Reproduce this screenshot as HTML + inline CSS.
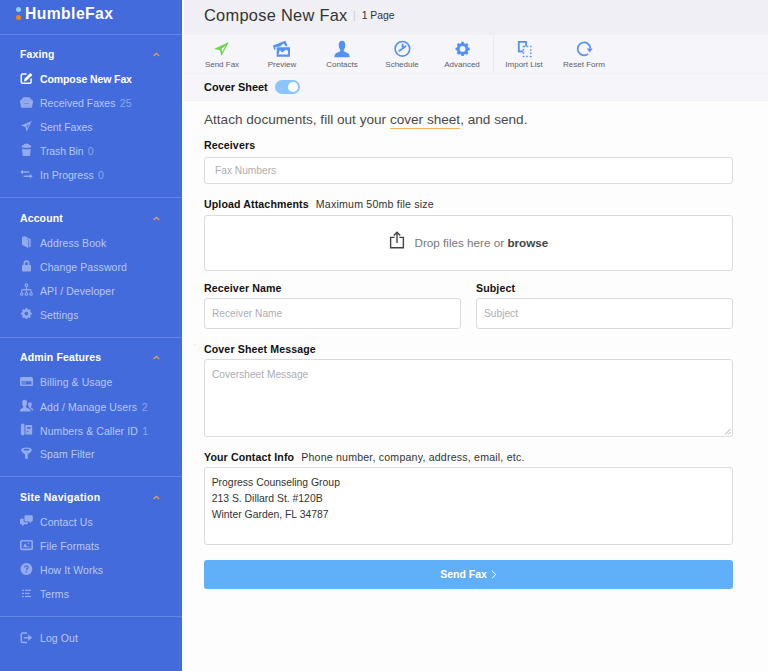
<!DOCTYPE html>
<html lang="en">
<head>
<meta charset="utf-8">
<title>HumbleFax - Compose New Fax</title>
<style>
*{box-sizing:border-box;margin:0;padding:0}
html,body{width:768px;height:671px;overflow:hidden;background:#fdfdfd;font-family:"Liberation Sans",sans-serif;}
body{position:relative}
#sb{position:absolute;left:0;top:0;width:181.5px;height:671px;background:#436bdc;color:#fff}
#sb .hr{position:absolute;left:0;width:182px;height:1px;background:#6585e4}
#logo{position:absolute;left:25px;top:3.2px;font-weight:bold;font-size:15.7px;letter-spacing:0.42px;line-height:22px;color:#fff}
.dot{position:absolute;width:5px;height:5px;border-radius:50%}
.sh{position:absolute;left:20px;font-weight:bold;font-size:10.5px;line-height:14px;color:#fff;white-space:nowrap;letter-spacing:0.12px}
.chev{position:absolute;left:152px;width:8px;height:6px}
.it{position:absolute;left:40px;font-size:10.5px;line-height:14px;color:#b9c8f3;white-space:nowrap;letter-spacing:0.08px}
.it b{font-weight:normal;color:#8da5ec;margin-left:1.5px}
.it.act{color:#fff;font-weight:bold;letter-spacing:-0.1px}
.ic{position:absolute;left:16px;width:20px;height:20px}
#main{position:absolute;left:182px;top:0;width:586px;height:671px}
#hd{position:absolute;left:0;top:0;width:586px;height:35px;background:#efeff5;z-index:2}
#tb{position:absolute;left:0;top:34px;width:586px;height:40px;background:#f5f5fa;border-bottom:1px solid #ededf3}
#cs{position:absolute;left:0;top:74px;width:586px;height:27.4px;background:#f5f5fa;border-bottom:1px solid #efeff4}
h1{position:absolute;left:22px;top:3.8px;letter-spacing:0.28px;font-weight:normal;font-size:16.4px;line-height:22px;color:#333;white-space:nowrap}
#pg{position:absolute;left:171px;top:10px;font-size:10.4px;line-height:12px;color:#333;white-space:nowrap}
.tl{position:absolute;top:26px;width:60px;text-align:center;font-size:8px;line-height:9px;color:#606066;white-space:nowrap}
.ti{position:absolute;top:6px;width:16px;height:16px}
.lb{position:absolute;left:22px;font-weight:bold;font-size:10.6px;line-height:13px;color:#111;white-space:nowrap;letter-spacing:0.12px}
.lb span{font-weight:normal;color:#333;margin-left:4px;letter-spacing:0.2px}
.inp{position:absolute;background:#fff;border:1px solid #dadadf;border-radius:3px;font-size:10.2px;color:#adadb2;line-height:12px}
.rz{position:absolute;width:7px;height:7px}
</style>
</head>
<body>
<div id="sb">
  <div class="dot" style="left:16px;top:7px;background:#8fd0ff"></div>
  <div class="dot" style="left:16px;top:14.5px;background:#f5870f"></div>
  <div id="logo">HumbleFax</div>
  <div class="hr" style="top:33.6px"></div>

  <div class="sh" style="top:47px">Faxing</div>
  <svg class="chev" style="top:51px" viewBox="0 0 8 6"><path d="M1.6 5 L4.4 2.3 L7.2 5" fill="none" stroke="#f0a04b" stroke-width="1.1"/></svg>
  <div class="it act" style="top:72px">Compose New Fax</div>
  <div class="it" style="top:96px;letter-spacing:0.01px">Received Faxes <b>25</b></div>
  <div class="it" style="top:120px;letter-spacing:-0.07px">Sent Faxes</div>
  <div class="it" style="top:144px;letter-spacing:-0.12px">Trash Bin <b>0</b></div>
  <div class="it" style="top:168px;letter-spacing:0px">In Progress <b>0</b></div>
  <div class="hr" style="top:197px"></div>

  <div class="sh" style="top:211px">Account</div>
  <svg class="chev" style="top:215px" viewBox="0 0 8 6"><path d="M1.6 5 L4.4 2.3 L7.2 5" fill="none" stroke="#f0a04b" stroke-width="1.1"/></svg>
  <div class="it" style="top:235.5px">Address Book</div>
  <div class="it" style="top:259.5px">Change Password</div>
  <div class="it" style="top:283.5px">API / Developer</div>
  <div class="it" style="top:307.5px">Settings</div>
  <div class="hr" style="top:337px"></div>

  <div class="sh" style="top:350px;letter-spacing:0.14px">Admin Features</div>
  <svg class="chev" style="top:354px" viewBox="0 0 8 6"><path d="M1.6 5 L4.4 2.3 L7.2 5" fill="none" stroke="#f0a04b" stroke-width="1.1"/></svg>
  <div class="it" style="top:375px">Billing &amp; Usage</div>
  <div class="it" style="top:399.5px">Add / Manage Users <b>2</b></div>
  <div class="it" style="top:423.5px">Numbers &amp; Caller ID <b>1</b></div>
  <div class="it" style="top:447px">Spam Filter</div>
  <div class="hr" style="top:476px"></div>

  <div class="sh" style="top:490px;letter-spacing:0.3px">Site Navigation</div>
  <svg class="chev" style="top:494px" viewBox="0 0 8 6"><path d="M1.6 5 L4.4 2.3 L7.2 5" fill="none" stroke="#f0a04b" stroke-width="1.1"/></svg>
  <div class="it" style="top:514.5px">Contact Us</div>
  <div class="it" style="top:538.5px">File Formats</div>
  <div class="it" style="top:562.5px">How It Works</div>
  <div class="it" style="top:586.5px">Terms</div>
  <div class="hr" style="top:616px"></div>
  <div class="it" style="top:631px">Log Out</div>
<!--SBI-->
<svg class="ic" style="top:69px" viewBox="0 0 20 20"><path d="M10 5H6.6Q5.3 5 5.3 6.3V13Q5.3 14.3 6.6 14.3H13.8Q15.1 14.3 15.1 13V10" fill="none" stroke="#fff" stroke-width="1.5" stroke-linecap="round"/><path d="M14.3 3.9L16.4 6L10.4 11.8L7.9 12.4L8.5 9.8Z" fill="#fff"/></svg>
<svg class="ic" style="top:93px" viewBox="0 0 20 20"><path fill-rule="evenodd" d="M7.6 4.3H13.3L16.6 7.4Q17.2 7.9 17 8.7L16 14Q15.9 14.7 15.1 14.7H5.9Q5.2 14.7 5 14L4 8.7Q3.8 7.9 4.4 7.4Z" fill="#94abeb"/><rect x="8.1" y="9.9" width="4.8" height="1.1" rx="0.5" fill="#6c8be4"/><path d="M5.5 7.3H15.5" stroke="#7f9ae6" stroke-width="0.5"/></svg>
<svg class="ic" style="top:117px" viewBox="0 0 20 20"><path fill-rule="evenodd" d="M15.9 3.9L4.9 8.6L9.4 9.9L10.6 14.6ZM13.2 6.9L11 11.2L10.6 8.9Z" fill="#94abeb"/></svg>
<svg class="ic" style="top:141px" viewBox="0 0 20 20"><path d="M5.4 5.6Q5.4 4.3 7.6 4L8.2 2.9Q10.4 2.3 12.6 2.9L13.2 4Q15.4 4.3 15.4 5.6Q15.4 6.9 10.4 6.9Q5.4 6.9 5.4 5.6Z" fill="#94abeb"/><path d="M6.1 7.7Q10.4 9 14.7 7.7L14.2 14Q14.1 15 13 15H7.8Q6.7 15 6.6 14Z" fill="#94abeb"/></svg>
<svg class="ic" style="top:165px" viewBox="0 0 20 20"><path d="M4.2 7L7 4.6V6.2H13.2V7.8H7V9.4Z" fill="#94abeb"/><path d="M16.7 11.3L13.9 8.9V10.5H7.6V12.1H13.9V13.7Z" fill="#94abeb"/></svg>
<svg class="ic" style="top:232px" viewBox="0 0 20 20"><path d="M6 5.3L8.3 4L12.3 8.4V16L6 12.7Z" fill="#94abeb"/><path d="M9.3 4.2L14.8 7.2V14.6L13 15.6V8.2L8.6 5.2Z" fill="#94abeb" opacity="0.85"/></svg>
<svg class="ic" style="top:256px" viewBox="0 0 20 20"><rect x="6" y="9" width="9" height="6.6" rx="0.8" fill="#94abeb"/><path d="M8.3 9.5V7.6A2.2 2.4 0 0 1 12.7 7.6V9.5" fill="none" stroke="#94abeb" stroke-width="1.7"/></svg>
<svg class="ic" style="top:280px" viewBox="0 0 20 20"><g fill="none" stroke="#94abeb" stroke-width="1.1"><circle cx="10.4" cy="5.2" r="1.3"/><circle cx="5.7" cy="14" r="1.3"/><circle cx="10.4" cy="14" r="1.3"/><circle cx="15.1" cy="14" r="1.3"/><path d="M10.4 6.5V12.7M5.7 12.7V10.8Q5.7 9.6 6.9 9.6H13.9Q15.1 9.6 15.1 10.8V12.7"/></g></svg>
<svg class="ic" style="top:304px" viewBox="0 0 20 20"><path fill-rule="evenodd" fill="#94abeb" d="M14.65 8.47 L15.83 8.74 L15.83 10.46 L14.65 10.73 L14.20 11.81 L14.85 12.83 L13.63 14.05 L12.61 13.40 L11.53 13.85 L11.26 15.03 L9.54 15.03 L9.27 13.85 L8.19 13.40 L7.17 14.05 L5.95 12.83 L6.60 11.81 L6.15 10.73 L4.97 10.46 L4.97 8.74 L6.15 8.47 L6.60 7.39 L5.95 6.37 L7.17 5.15 L8.19 5.80 L9.27 5.35 L9.54 4.17 L11.26 4.17 L11.53 5.35 L12.61 5.80 L13.63 5.15 L14.85 6.37 L14.20 7.39Z M8.50 9.60 a1.90 1.90 0 1 0 3.80 0 a1.90 1.90 0 1 0 -3.80 0Z"/></svg>
<svg class="ic" style="top:372px" viewBox="0 0 20 20"><path fill-rule="evenodd" d="M5.5 5H15.5Q17 5 17 6.5V12.6Q17 14.1 15.5 14.1H5.5Q4 14.1 4 12.6V6.5Q4 5 5.5 5ZM5.6 9.2V12.5H15.4V9.2Z" fill="#94abeb"/><rect x="6.3" y="10.3" width="3.8" height="1.2" fill="#94abeb" opacity="0.8"/></svg>
<svg class="ic" style="top:396px" viewBox="0 0 20 20"><path d="M8.6 3.7Q11.1 3.7 11.1 6.8Q11.1 9.2 9.9 10.2V11.3L13.6 13Q14.6 13.6 14.6 15.6H3.8Q3.8 13.6 4.8 13L7.3 11.3V10.2Q6.1 9.2 6.1 6.8Q6.1 3.7 8.6 3.7Z" fill="#94abeb"/><path d="M13.9 6.2Q15.8 6.2 15.8 8.3Q15.8 9.8 15 10.6V11.4L16.6 12.6Q17.2 13.2 17.2 14.4H15.7Q15.4 12.8 14.2 12.3L12.9 11.6V10.6Q12 9.8 12 8.3Q12 6.2 13.9 6.2Z" fill="#94abeb"/></svg>
<svg class="ic" style="top:420px" viewBox="0 0 20 20"><rect x="4.9" y="3.6" width="3.6" height="12" rx="1.8" fill="#94abeb"/><path fill-rule="evenodd" d="M10.4 5H15.2Q16.2 5 16.2 6V13.6Q16.2 14.6 15.2 14.6H10.4Q9.4 14.6 9.4 13.6V6Q9.4 5 10.4 5ZM11 7.2V8.8H14.6V7.2ZM11 11V12.2H12.3V11Z" fill="#94abeb"/></svg>
<svg class="ic" style="top:444px" viewBox="0 0 20 20"><path fill-rule="evenodd" d="M10.4 3.4Q15.8 3.4 15.8 6Q15.8 7 14.6 8L11.8 10.4V14.2Q11.8 14.9 10.4 14.9Q9 14.9 9 14.2V10.4L6.2 8Q5 7 5 6Q5 3.4 10.4 3.4ZM10.4 4.8Q7.4 4.8 7.4 5.7Q7.4 6.6 10.4 6.6Q13.4 6.6 13.4 5.7Q13.4 4.8 10.4 4.8Z" fill="#94abeb"/></svg>
<svg class="ic" style="top:511px" viewBox="0 0 20 20"><path d="M9.5 4.3H15.8Q16.8 4.3 16.8 5.3V9.4Q16.8 10.4 15.8 10.4H15.3L14.5 12.3L12.8 10.4H9.5Q8.5 10.4 8.5 9.4V5.3Q8.5 4.3 9.5 4.3Z" fill="#94abeb"/><path d="M5 7.7H7.6V10Q7.6 11.3 8.9 11.3H11.8V12.2Q11.8 13.2 10.8 13.2H8.2L6.5 15.4L6 13.2H5Q4 13.2 4 12.2V8.7Q4 7.7 5 7.7Z" fill="#94abeb"/></svg>
<svg class="ic" style="top:535px" viewBox="0 0 20 20"><rect x="4.8" y="5.8" width="11.4" height="8.6" rx="1.2" fill="none" stroke="#94abeb" stroke-width="1.6"/><path d="M7 12.2L9 8.2L11.2 11.4H13.6V12.2Z" fill="#94abeb"/><circle cx="12.4" cy="8.6" r="0.8" fill="#94abeb"/></svg>
<svg class="ic" style="top:559px" viewBox="0 0 20 20"><circle cx="10.4" cy="10" r="5.9" fill="#94abeb"/><path d="M8.7 8.4Q8.7 6.8 10.4 6.8Q12.1 6.8 12.1 8.3Q12.1 9.3 11.1 9.8Q10.4 10.2 10.4 11.3" fill="none" stroke="#436bdc" stroke-width="1.3"/><circle cx="10.4" cy="13" r="0.8" fill="#436bdc"/></svg>
<svg class="ic" style="top:583px" viewBox="0 0 20 20"><g fill="#94abeb"><rect x="6" y="6.7" width="2" height="1.2"/><rect x="9" y="6.7" width="6" height="1.2"/><rect x="6" y="9.8" width="2" height="1.2"/><rect x="9" y="9.8" width="4.6" height="1.2"/><rect x="6" y="12.9" width="2" height="1.2"/><rect x="9" y="12.9" width="6" height="1.2"/></g></svg>
<svg class="ic" style="top:628px" viewBox="0 0 20 20"><path d="M11 5H7Q5.3 5 5.3 6.7V12.8Q5.3 14.5 7 14.5H11" fill="none" stroke="#94abeb" stroke-width="1.6"/><path d="M7.8 8.9H12.2V6.5L16.2 9.75L12.2 13V10.6H7.8Z" fill="#94abeb"/></svg>
<!--/SBI-->
</div>

<div id="main">
  <div style="position:absolute;left:0;top:0;width:2px;height:671px;background:#fbfbfd;z-index:3"></div>
  <div id="hd">
    <h1>Compose New Fax</h1>
    <div id="pg"><span style="color:#c8c8cc;margin-right:6px">|</span>1 Page</div>
  </div>
  <div id="tb">
<!--TBI-->
<svg style="position:absolute;left:0;top:0" width="586" height="39" viewBox="0 0 586 39"><path fill-rule="evenodd" fill="#6fd550" d="M46.8 7.9 L32.0 14.9 L38.0 16.3 L39.4 22.0 Z M43.6 11.6 L40.2 18.0 L39.6 14.8 Z"/>
<path fill="#5291f8" d="M91.0 11.4 L103.4 6.7 L105.4 11.8 L104.0 12.4 L101.5 9.4 L98.0 12.4 L93.3 12.9 L93.5 15.4 L92.2 15.7 Z"/>
<path fill-rule="evenodd" fill="#5291f8" d="M94.7 13.3 H108.0 V22.7 H94.7 Z M96.4 20.5 L97.8 16.0 L100.3 18.4 L104.1 15.5 L106.0 17.1 L106.2 20.5 Z"/>
<path fill="#5291f8" d="M160.0 6.7 Q163.3 6.7 163.3 11.2 Q163.3 14.0 161.8 15.6 V17.2 L166.0 19.2 Q167.7 20.0 167.7 23.2 H152.3 Q152.3 20.0 154.0 19.2 L158.2 17.2 V15.6 Q156.7 14.0 156.7 11.2 Q156.7 6.7 160.0 6.7 Z"/>
<circle cx="220.4" cy="14.8" r="7.3" fill="none" stroke="#5291f8" stroke-width="1.6"/>
<path d="M220.6 10.4 V14.6 L217.4 16.8 M220.6 14.6 L223.4 12.2" fill="none" stroke="#5291f8" stroke-width="1.8" stroke-linecap="round"/>
<path fill-rule="evenodd" fill="#5291f8" d="M286.21 13.41 L287.71 13.77 L287.71 16.03 L286.21 16.39 L285.62 17.81 L286.42 19.13 L284.83 20.72 L283.51 19.92 L282.09 20.51 L281.73 22.01 L279.47 22.01 L279.11 20.51 L277.69 19.92 L276.37 20.72 L274.78 19.13 L275.58 17.81 L274.99 16.39 L273.49 16.03 L273.49 13.77 L274.99 13.41 L275.58 11.99 L274.78 10.67 L276.37 9.08 L277.69 9.88 L279.11 9.29 L279.47 7.79 L281.73 7.79 L282.09 9.29 L283.51 9.88 L284.83 9.08 L286.42 10.67 L285.62 11.99Z M277.70 14.90 a2.90 2.90 0 1 0 5.80 0 a2.90 2.90 0 1 0 -5.80 0Z"/>
<rect x="336.8" y="7.9" width="7.2" height="9.6" fill="none" stroke="#5291f8" stroke-width="1.8"/>
<rect x="341.4" y="12.4" width="7.4" height="10" fill="#f5f5fa" stroke="#5291f8" stroke-width="1.5" stroke-dasharray="1.5 1.9"/>
<path d="M406.1 19.8 A6.4 6.4 0 1 1 408.4 14.3" fill="none" stroke="#5291f8" stroke-width="1.7"/>
<path d="M404.8 14.6 L410.6 14.6 L407.8 18.4 Z" fill="#5291f8"/></svg>
<!--/TBI-->
    <div class="tl" style="left:10px">Send Fax</div>
    <div class="tl" style="left:70px">Preview</div>
    <div class="tl" style="left:130px">Contacts</div>
    <div class="tl" style="left:190px">Schedule</div>
    <div class="tl" style="left:250px">Advanced</div>
    <div style="position:absolute;left:311.4px;top:0;width:1px;height:39px;background:#ebebf1"></div>
    <div class="tl" style="left:312px">Import List</div>
    <div class="tl" style="left:372px">Reset Form</div>
  </div>
  <div id="cs">
    <div class="lb" style="top:6.5px;font-size:10.9px;letter-spacing:0.02px">Cover Sheet</div>
    <div style="position:absolute;left:92.5px;top:6.3px;width:25.5px;height:14px;border-radius:7px;background:#8ac6fd"></div>
    <div style="position:absolute;left:105.8px;top:8.1px;width:10.4px;height:10.4px;border-radius:6px;background:#fff"></div>
  </div>

  <div style="position:absolute;left:22px;top:111.8px;font-size:13.6px;line-height:16px;color:#4a4a4a;white-space:nowrap">Attach documents, fill out your <span style="border-bottom:1.6px solid #f6b45c;padding-bottom:1px">cover sheet</span>, and send.</div>

  <div class="lb" style="top:139px">Receivers</div>
  <div class="inp" style="left:22px;top:157px;width:529px;height:27px;padding:7px 10px">Fax Numbers</div>

  <div class="lb" style="top:198px">Upload Attachments <span>Maximum 50mb file size</span></div>
  <div class="inp" style="left:22px;top:215px;width:529px;height:56px"></div>
  <svg style="position:absolute;left:206px;top:230px" width="18" height="20" viewBox="0 0 18 20"><path d="M6.6 7.4H2.6V17.8H15.4V7.4H11.4" fill="none" stroke="#444" stroke-width="1.4"/><path d="M9 13V2.4M5.8 5.4L9 2.2L12.2 5.4" fill="none" stroke="#444" stroke-width="1.4"/></svg>
  <div style="position:absolute;left:232.5px;top:236px;font-size:11.7px;line-height:14px;color:#777;white-space:nowrap">Drop files here or <b style="color:#444">browse</b></div>

  <div class="lb" style="top:282px">Receiver Name</div>
  <div class="lb" style="top:282px;left:294px">Subject</div>
  <div class="inp" style="left:22px;top:298px;width:257px;height:31px;padding:9px 7px">Receiver Name</div>
  <div class="inp" style="left:294px;top:298px;width:257px;height:31px;padding:9px 7px">Subject</div>

  <div class="lb" style="top:343px">Cover Sheet Message</div>
  <div class="inp" style="left:22px;top:359px;width:529px;height:78px;padding:9px 7px">Coversheet Message</div>

  <svg class="rz" style="left:542px;top:428px" viewBox="0 0 7 7"><path d="M6.5 1L1 6.5M6.5 4L4 6.5" stroke="#999" stroke-width="0.8" fill="none"/></svg>
  <svg class="rz" style="left:542px;top:536px" viewBox="0 0 7 7"><path d="M6.5 1L1 6.5M6.5 4L4 6.5" stroke="#999" stroke-width="0.8" fill="none"/></svg>
  <div class="lb" style="top:451px">Your Contact Info <span>Phone number, company, address, email, etc.</span></div>
  <div class="inp" style="left:22px;top:467px;width:529px;height:78px;padding:6.7px 6.7px;color:#333;line-height:16px;font-size:10.4px">Progress Counseling Group<br>213 S. Dillard St. #120B<br>Winter Garden, FL 34787</div>

  <div style="position:absolute;left:22px;top:559.5px;width:529px;height:29px;background:#5fb0f9;border-radius:3px;color:#fff;font-weight:bold;font-size:10.5px;line-height:29px;text-align:center">Send Fax <svg width="6" height="9" viewBox="0 0 6 9" style="vertical-align:-1px;margin-left:1px"><path d="M1 0.8L4.8 4.5L1 8.2" fill="none" stroke="#fff" stroke-width="1"/></svg></div>
</div>
</body>
</html>
